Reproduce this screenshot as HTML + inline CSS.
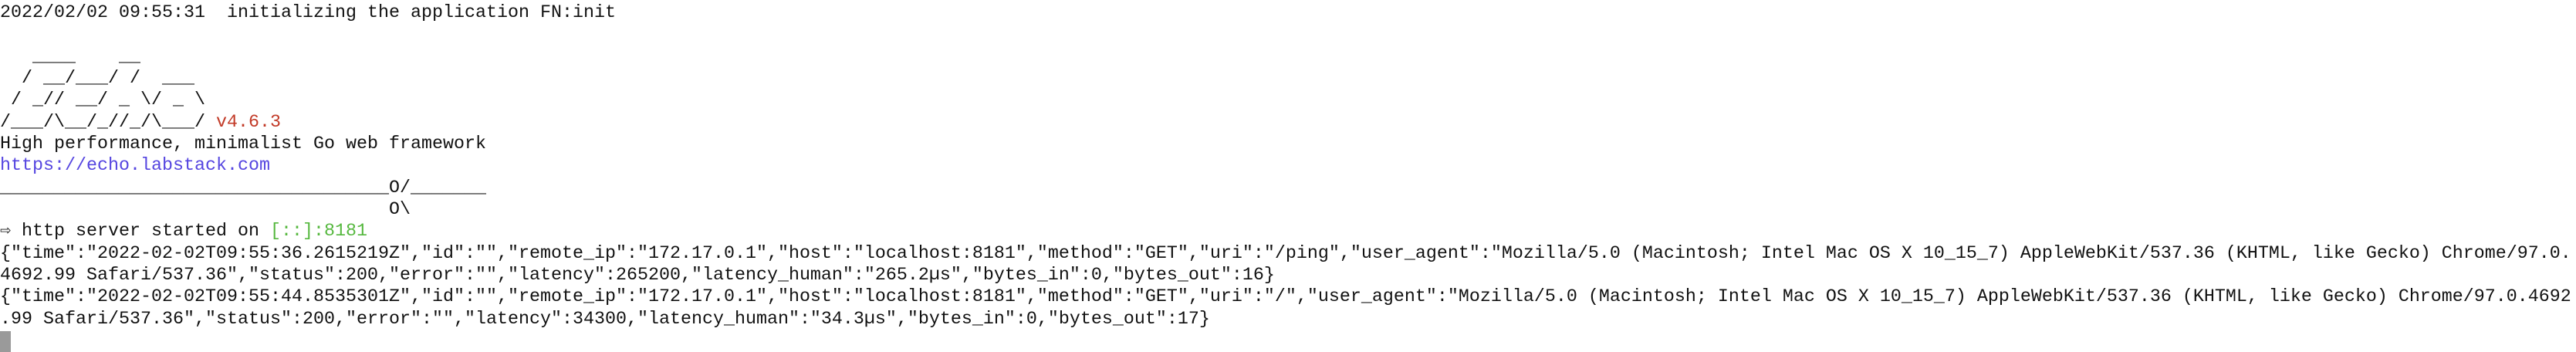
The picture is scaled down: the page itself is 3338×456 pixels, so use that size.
<!DOCTYPE html>
<html><head><meta charset="utf-8"><style>
html,body{margin:0;padding:0;background:#fff;width:3338px;height:456px;overflow:hidden}
pre{margin:0;padding:3px 0 0 0;font-family:"Liberation Mono",monospace;font-size:23.33px;line-height:28.33px;color:#111;white-space:pre}
.r{color:#c23a27}.b{color:#5545e0}.g{color:#56b83f}
.cur{position:absolute;left:0;top:429px;width:14px;height:27px;background:#9a9a9a}
</style></head><body><pre>2022/02/02 09:55:31  initializing the application FN:init

   ____    __
  / __/___/ /  ___
 / _// __/ _ \/ _ \
/___/\__/_//_/\___/ <span class="r">v4.6.3</span>
High performance, minimalist Go web framework
<span class="b">https://echo.labstack.com</span>
____________________________________O/_______
                                    O\
⇨ http server started on <span class="g">[::]:8181</span>
{"time":"2022-02-02T09:55:36.2615219Z","id":"","remote_ip":"172.17.0.1","host":"localhost:8181","method":"GET","uri":"/ping","user_agent":"Mozilla/5.0 (Macintosh; Intel Mac OS X 10_15_7) AppleWebKit/537.36 (KHTML, like Gecko) Chrome/97.0.
4692.99 Safari/537.36","status":200,"error":"","latency":265200,"latency_human":"265.2µs","bytes_in":0,"bytes_out":16}
{"time":"2022-02-02T09:55:44.8535301Z","id":"","remote_ip":"172.17.0.1","host":"localhost:8181","method":"GET","uri":"/","user_agent":"Mozilla/5.0 (Macintosh; Intel Mac OS X 10_15_7) AppleWebKit/537.36 (KHTML, like Gecko) Chrome/97.0.4692
.99 Safari/537.36","status":200,"error":"","latency":34300,"latency_human":"34.3µs","bytes_in":0,"bytes_out":17}</pre><div class="cur"></div></body></html>
